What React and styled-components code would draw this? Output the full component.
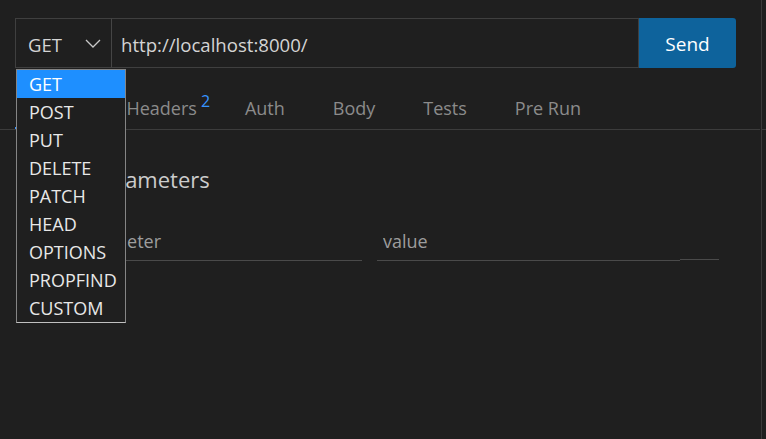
import styled, { createGlobalStyle } from "styled-components";

const methods = [
  "GET",
  "POST",
  "PUT",
  "DELETE",
  "PATCH",
  "HEAD",
  "OPTIONS",
  "PROPFIND",
  "CUSTOM",
];

const tabs = ["Params", "Headers", "Auth", "Body", "Tests", "Pre Run"];

export default function App() {
  return (
    <>
      <GlobalStyle />
      <Page>
        <Main>
          <RequestBar>
            <MethodSelect>
              <MethodValue>GET</MethodValue>
              <svg width="16" height="9" viewBox="0 0 16 9">
                <path
                  d="M1 1l7 7 7-7"
                  fill="none"
                  stroke="#c8c8c8"
                  strokeWidth="1.3"
                />
              </svg>
              <MethodMenu>
                {methods.map((m, i) => (
                  <MethodItem key={m} $active={i === 0}>
                    {m}
                  </MethodItem>
                ))}
              </MethodMenu>
            </MethodSelect>
            <UrlInput defaultValue="http://localhost:8000/" />
            <SendButton>Send</SendButton>
          </RequestBar>

          <TabBar>
            {tabs.map((t, i) => (
              <Tab key={t} $active={i === 0}>
                {t}
                {t === "Headers" && <Badge>2</Badge>}
              </Tab>
            ))}
          </TabBar>

          <Section>
            <Heading>Query Parameters</Heading>
            <ParamRow>
              <Check />
              <ParamInput placeholder="parameter" $width="296px" />
              <ParamInput placeholder="value" $width="303px" />
              <RowAction />
            </ParamRow>
          </Section>
        </Main>
        <Sash />
        <Rest />
      </Page>
    </>
  );
}

const GlobalStyle = createGlobalStyle`
  html, body {
    margin: 0;
    padding: 0;
    background: #1f1f1f;
  }
  body {
    font-family: "Open Sans", "Noto Sans", sans-serif;
    color: #cccccc;
  }
  * { box-sizing: border-box; }
`;

const Page = styled.div`
  display: flex;
  width: 766px;
  height: 439px;
  background: #1f1f1f;
  overflow: hidden;
`;

const Main = styled.div`
  width: 760px;
  display: flex;
  flex-direction: column;
`;

const Sash = styled.div`
  width: 2px;
  background: #3a3a3a;
  border-left: 1px solid #1f1f1f;
`;

const Rest = styled.div`
  flex: 1;
  height: 130px;
  border-bottom: 1px solid #3c3c3c;
`;

const RequestBar = styled.div`
  display: flex;
  height: 50px;
  width: 721px;
  margin: 18px 0 0 15px;
`;

const MethodSelect = styled.div`
  position: relative;
  width: 97px;
  display: flex;
  align-items: center;
  justify-content: space-between;
  padding: 2px 10px 0 12px;
  border: 1px solid #3f3f3f;
  border-right: 1px solid #454545;
  svg {
    margin-top: -1px;
  }
`;

const MethodValue = styled.span`
  font-size: 18.5px;
  color: #d4d4d4;
`;

const MethodMenu = styled.div`
  position: absolute;
  top: 50px;
  left: 0;
  width: 110px;
  background: #1f1f1f;
  border: 1px solid #858585;
  border-bottom-color: #c0c0c0;
  z-index: 5;
`;

const MethodItem = styled.div`
  height: 28px;
  line-height: 28px;
  padding-left: 12px;
  font-size: 18px;
  color: ${(p) => (p.$active ? "#ffffff" : "#e8e8e8")};
  background: ${(p) => (p.$active ? "#1e8fff" : "transparent")};
  white-space: nowrap;
`;

const UrlInput = styled.input`
  flex: 1;
  min-width: 0;
  height: 50px;
  background: transparent;
  border: 1px solid #3f3f3f;
  border-left: none;
  outline: none;
  padding: 2px 9px 0;
  font-family: inherit;
  font-size: 18.6px;
  color: #d4d4d4;
`;

const SendButton = styled.button`
  width: 97px;
  height: 50px;
  padding-top: 2px;
  border: none;
  border-radius: 0 3px 3px 0;
  background: #0e639c;
  color: #ffffff;
  font-family: inherit;
  font-size: 19px;
`;

const TabBar = styled.div`
  display: flex;
  gap: 48px;
  margin-top: 22px;
  padding-left: 15px;
  height: 40px;
  border-bottom: 1px solid #3c3c3c;
`;

const Tab = styled.div`
  position: relative;
  font-size: 18px;
  line-height: 36px;
  color: #8b8b8b;
  border-bottom: 2px solid ${(p) => (p.$active ? "#3794ff" : "transparent")};
`;

const Badge = styled.span`
  position: absolute;
  left: 100%;
  top: -7px;
  margin-left: 4px;
  font-size: 16px;
  color: #3794ff;
`;

const Section = styled.div`
  padding: 29px 0 0 22px;
`;

const Heading = styled.h2`
  margin: 0;
  font-weight: 400;
  font-size: 22px;
  line-height: 40px;
  color: #cccccc;
`;

const ParamRow = styled.div`
  display: flex;
  align-items: flex-end;
  margin-top: 21px;
`;

const Check = styled.div`
  width: 44px;
  height: 40px;
`;

const ParamInput = styled.input`
  width: ${(p) => p.$width};
  height: 40px;
  margin-right: 15px;
  background: transparent;
  border: none;
  border-bottom: 1px solid #4a4a4a;
  outline: none;
  padding: 0 6px;
  font-family: inherit;
  font-size: 18px;
  color: #d4d4d4;
  &::placeholder {
    color: #9d9d9d;
  }
  &:last-of-type {
    margin-right: 0;
  }
`;

const RowAction = styled.div`
  width: 39px;
  height: 40px;
  margin-bottom: 1px;
  border-bottom: 1px solid #4a4a4a;
`;
